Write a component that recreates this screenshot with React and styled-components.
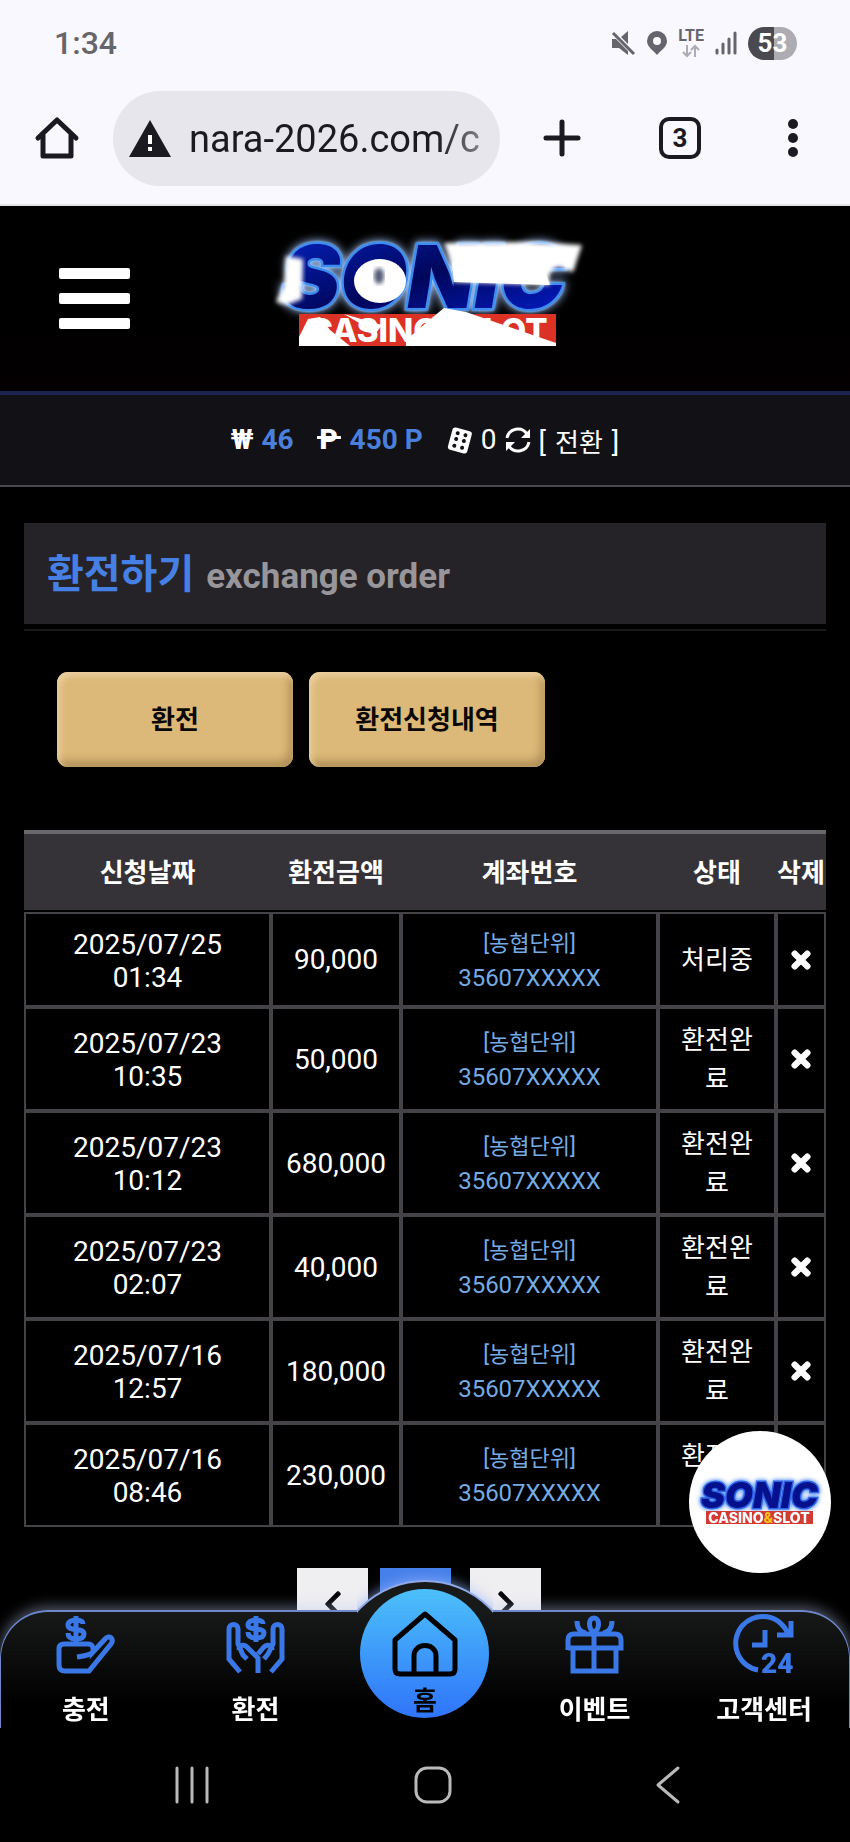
import React from "react";
import styled, { createGlobalStyle } from "styled-components";
import { FaTimes, FaChevronLeft, FaChevronRight } from "react-icons/fa";

const GlobalStyle = createGlobalStyle`
  * {
    box-sizing: border-box;
  }
  body {
    margin: 0;
    background: #000;
    color: #fff;
    font-family: Roboto, "Noto Sans CJK KR", sans-serif;
    font-size: 28px;
  }
  button {
    font-family: inherit;
    border: 0;
    padding: 0;
    background: none;
    color: inherit;
    cursor: pointer;
  }
  a {
    color: inherit;
    text-decoration: none;
  }
  svg {
    display: block;
    flex: none;
    overflow: visible;
  }
`;

const orders = [
  { day: "2025/07/25", time: "01:34", amount: "90,000", status: "처리중" },
  { day: "2025/07/23", time: "10:35", amount: "50,000", status: "환전완료" },
  { day: "2025/07/23", time: "10:12", amount: "680,000", status: "환전완료" },
  { day: "2025/07/23", time: "02:07", amount: "40,000", status: "환전완료" },
  { day: "2025/07/16", time: "12:57", amount: "180,000", status: "환전완료" },
  { day: "2025/07/16", time: "08:46", amount: "230,000", status: "환전완료" },
];

/* ---------- phone status bar + browser bar ---------- */

const Chrome = styled.div`
  background: #f9f8ff;
  color: #1b1a20;
  border-bottom: 2px solid #e2e1e6;
`;

const StatusBar = styled.div`
  display: flex;
  align-items: center;
  height: 86px;
  padding: 0 53px 0 54px;
  color: #66656c;
`;

const Clock = styled.span`
  flex: 1;
  font-size: 32px;
  font-weight: 500;
`;

const StatusIcons = styled.div`
  display: flex;
  align-items: center;
  gap: 11px;
`;

const Network = styled.div`
  display: flex;
  flex-direction: column;
  align-items: center;
  gap: 2px;
  font-size: 16px;
  line-height: 14px;
  font-weight: 700;
`;

const Battery = styled.span`
  width: 49px;
  height: 33px;
  border-radius: 17px;
  background: linear-gradient(90deg, #4a494f 53%, #adacb2 53%);
  color: #fff;
  font-size: 26px;
  font-weight: 700;
  line-height: 33px;
  text-align: center;
`;

const BrowserBar = styled.div`
  display: flex;
  align-items: center;
  height: 118px;
  padding: 0 52px 14px 35px;
`;

const BarButton = styled.button`
  flex: none;
  margin-right: ${(p) => p.$after || 0}px;
`;

const Omnibox = styled.label`
  display: flex;
  flex: 1;
  align-items: center;
  gap: 18px;
  min-width: 0;
  height: 95px;
  margin-right: 43px;
  padding: 0 16px;
  border-radius: 48px;
  background: #e7e6ec;
`;

const UrlInput = styled.input`
  flex: 1;
  min-width: 0;
  padding: 2px 0 0;
  border: 0;
  outline: 0;
  font-family: Roboto, sans-serif;
  font-size: 38px;
  color: transparent;
  background: linear-gradient(90deg, #1b1a20 84%, #8a898f);
  background-clip: text;
  -webkit-background-clip: text;
`;

const TabCount = styled(BarButton)`
  width: 42px;
  height: 42px;
  border: 4px solid #1b1a20;
  border-radius: 10px;
  font-size: 26px;
  line-height: 34px;
  font-weight: 700;
`;

/* ---------- site header ---------- */

const SiteHeader = styled.header`
  display: grid;
  grid-template-columns: 1fr auto 1fr;
  align-items: center;
  height: 189px;
  padding: 0 49px 0 59px;
  border-bottom: 4px solid #1b2450;
  background: linear-gradient(#000 50%, #040001);
`;

const LogoLink = styled.a`
  padding-bottom: 12px;
`;

const MenuButton = styled.button`
  display: flex;
  flex-direction: column;
  gap: 14px;
  width: 71px;

  span {
    height: 11px;
    border-radius: 2px;
    background: #fff;
  }
`;

const Balance = styled.div`
  display: flex;
  align-items: center;
  justify-content: center;
  height: 92px;
  background: #121115;
  border-bottom: 2px solid #4a484c;
  line-height: 38px;
`;

const BalanceItem = styled.span`
  display: flex;
  align-items: center;
  gap: 8px;
  margin-right: ${(p) => p.$after || 0}px;
`;

const Money = styled.strong`
  color: #4a7fdc;
`;

const PesoSign = styled.b`
  position: relative;
  width: 26px;
  font-weight: 900;
  text-align: center;

  &::before {
    content: "";
    position: absolute;
    left: 1px;
    right: 1px;
    top: 15px;
    height: 3px;
    background: #fff;
  }
`;

const SwitchButton = styled.button`
  display: flex;
  align-items: baseline;
  gap: 9px;
  font-size: 28px;

  span {
    font-size: 26px;
  }
`;

/* ---------- page ---------- */

const Main = styled.main`
  padding: 36px 24px 200px;
`;

const TitleBox = styled.div`
  padding-bottom: 5px;
  border-bottom: 2px solid #19181b;
`;

const Title = styled.h1`
  display: flex;
  align-items: baseline;
  gap: 12px;
  height: 101px;
  margin: 0;
  padding: 3px 23px 0;
  background: #252327;
  color: #4680e4;
  font-size: 40px;
  line-height: 98px;
  font-weight: 700;

  small {
    color: #98969b;
    font-size: 35px;
  }
`;

const Actions = styled.div`
  display: flex;
  gap: 16px;
  margin: 41px 33px 63px;
`;

const GoldButton = styled.button`
  width: 236px;
  height: 95px;
  padding-bottom: 4px;
  border-radius: 11px;
  background: #dcb978;
  box-shadow: inset 3px 4px 6px #ecd0a2, inset -4px -6px 8px #b08f58;
  color: #0a0806;
  font-size: 26px;
  font-weight: 700;
`;

const Table = styled.table`
  width: 100%;
  table-layout: fixed;
  border-collapse: separate;
  border-spacing: 0;
  text-align: center;
`;

const HeadCell = styled.th`
  height: 82px;
  padding: 0 0 4px;
  border-top: 4px solid #6a686c;
  border-bottom: 2px solid #000;
  background: #353337;
  background-clip: padding-box;
  font-size: 26px;
  font-weight: 700;
  white-space: nowrap;
`;

const Cell = styled.td`
  height: 95px;
  padding: 12px 16px 10px;
  border: 2px solid #454347;
  font-size: ${(p) => (p.$korean ? 26 : 28)}px;
  line-height: ${(p) => (p.$korean ? 39 : 33)}px;
  word-break: break-all;
`;

const TightCell = styled(Cell)`
  padding: 0;
`;

const Account = styled.a`
  display: flex;
  flex-direction: column;
  color: #75abe4;
  font-size: 24px;
  line-height: 34px;

  span {
    font-size: 22px;
  }
`;

const DeleteButton = styled.button`
  display: flex;
  justify-content: center;
  width: 100%;

  svg {
    stroke: #fff;
    stroke-width: 30px;
  }
`;

const Pager = styled.nav`
  display: flex;
  justify-content: center;
  margin: 41px 12px 0 0;
`;

const PageLink = styled.a`
  display: flex;
  align-items: center;
  justify-content: center;
  width: 71px;
  height: 71px;
  margin-right: ${(p) => p.$after || 0}px;
  background: ${(p) => (p.$current ? "#4680ea" : "#efeef1")};
  color: ${(p) => (p.$current ? "#fff" : "#000")};
`;

/* ---------- floating parts ---------- */

const Bubble = styled.a`
  position: fixed;
  right: 19px;
  bottom: 269px;
  width: 142px;
  height: 142px;
  border-radius: 50%;
  background: #fff;
`;

const Dock = styled.div`
  position: fixed;
  left: 0;
  right: 0;
  bottom: 0;
`;

const Tabs = styled.nav`
  position: relative;
  display: grid;
  grid-template-columns: repeat(5, 1fr);
  height: 118px;
  border: 2px solid #6f88cc;
  border-width: 2px 1px 0;
  border-radius: 48px 48px 0 0;
  background: linear-gradient(#171918, #000 80%);
  box-shadow: 0 -3px 14px rgba(190, 205, 245, 0.45);
`;

// only the cap above the bar is visible, the rest is clipped away
const Hump = styled.div`
  position: absolute;
  left: 50%;
  top: -32px;
  width: 184px;
  height: 184px;
  margin-left: -92px;
  border: 2px solid #8fa9ea;
  border-radius: 50%;
  background: #181a19;
  box-shadow: 0 -2px 12px rgba(150, 180, 255, 0.6);
  clip-path: inset(-20px 24px 151px 24px);
`;

const Tab = styled.a`
  position: relative;
  display: flex;
  flex-direction: column;
  align-items: center;
  gap: 18px;
  padding-top: 4px;
  color: #3b78e7;

  span {
    color: #fff;
    font-size: 26px;
    line-height: 38px;
    font-weight: 700;
  }
`;

const HomeTab = styled.a`
  position: relative;
  display: flex;
  flex-direction: column;
  align-items: center;
  justify-self: center;
  gap: 3px;
  width: 129px;
  height: 129px;
  margin-top: -23px;
  padding-top: 22px;
  border-radius: 50%;
  background: linear-gradient(#4cc0fa, #2f74fa);
  color: #000;
  font-size: 26px;
  line-height: 42px;
  font-weight: 700;
`;

const SystemBar = styled.div`
  position: relative;
  display: flex;
  justify-content: space-between;
  align-items: center;
  height: 114px;
  padding: 0 170px 0 175px;
  background: #000;
  color: #b9b8bb;
`;

/* ---------- drawings ---------- */

const strokeProps = {
  fill: "none",
  stroke: "currentColor",
  strokeWidth: 5,
};

const Wordmark = styled.text`
  font-family: Inter, Roboto, sans-serif;
  font-weight: 900;
  font-style: italic;
  paint-order: stroke;
  filter: drop-shadow(0 0 1px #8cd0ff) drop-shadow(0 0 ${(p) => p.$glow}px ${(p) => p.$glowColor});
`;

const Tagline = styled.text`
  font-family: Inter, Roboto, sans-serif;
  font-weight: 800;
  text-anchor: middle;
  fill: #fff;
`;

function SiteLogo() {
  return (
    <svg width="340" height="135" viewBox="0 0 340 135" role="img" aria-label="SONIC CASINO&SLOT">
      <defs>
        <filter id="soft">
          <feGaussianBlur stdDeviation="2" />
        </filter>
        <linearGradient id="blue" x1="0" y1="0" x2="1" y2="1">
          <stop offset="0" stopColor="#0524c8" />
          <stop offset="0.5" stopColor="#00065a" />
          <stop offset="1" stopColor="#0220d8" />
        </linearGradient>
      </defs>
      <Wordmark x="22" y="83" fontSize="87" fill="url(#blue)" stroke="#3f8cf0" strokeWidth="5" $glow={5} $glowColor="#a9c6ff">
        SONIC
      </Wordmark>
      <rect x="39" y="89" width="257" height="32" fill="#dc3226" />
      <Tagline x="168" y="117" fontSize="33">CASINO&amp;SLOT</Tagline>
      {/* torn white patches */}
      <g fill="#fff">
        <path filter="url(#soft)" d="M26 31L43 34L42 74L27 80L16 77L24 59Z" />
        <ellipse cx="120" cy="56" rx="26" ry="22" />
        <ellipse cx="119" cy="51" rx="5" ry="8" fill="#555c78" filter="url(#soft)" />
        <path filter="url(#soft)" d="M184 18L270 17L322 20L313 47L299 42Q286 45 290 60L194 57L191 38Z" />
        <path d="M194 57L192 38L200 24H290L284 44L290 60Z" />
        <path d="M39 112L48 94L60 92L70 105L90 121H39Z" />
        <path d="M84 89L108 96L122 100L116 108Z" />
        <path d="M146 115L173 92L184 83L206 87L296 118V121H146Z" />
      </g>
    </svg>
  );
}

function BubbleLogo() {
  return (
    <svg width="142" height="142" viewBox="0 0 142 142" role="img" aria-label="SONIC CASINO&SLOT">
      <Wordmark x="12" y="77" fontSize="36" fill="#04108c" stroke="#2f62e8" strokeWidth="3" $glow={2} $glowColor="#4a7cf0">
        SONIC
      </Wordmark>
      <rect x="17" y="80" width="107" height="13" fill="#d23a34" />
      <Tagline x="70" y="92" fontSize="14">
        CASINO<tspan fill="#ffc21c">&amp;</tspan>SLOT
      </Tagline>
    </svg>
  );
}

const MuteIcon = () => (
  <svg width="26" height="26" viewBox="0 0 26 26" fill="currentColor">
    <path d="M2 9H6L18 21V25L9 18H2ZM11 7L18 1V14Z" />
    <path d="M3 3L24 24" stroke="currentColor" strokeWidth="3" />
  </svg>
);

const PinIcon = () => (
  <svg width="20" height="24" viewBox="0 0 20 24" fill="currentColor">
    <path fillRule="evenodd" d="M10 0a10 10 0 0 0-10 10c0 6 6 9 10 14c4-5 10-8 10-14a10 10 0 0 0-10-10zM10 6a4 4 0 1 1 0 8a4 4 0 0 1 0-8z" />
  </svg>
);

const SignalIcon = () => (
  <svg width="22" height="24" viewBox="0 0 22 24" stroke="currentColor" strokeWidth="3" strokeLinecap="round">
    <path d="M2 19V22M8 13V22M14 8V22M20 2V22" />
  </svg>
);

const BrowserHome = () => (
  <svg width="44" height="44" viewBox="0 0 44 44" {...strokeProps} strokeLinejoin="round" strokeLinecap="round">
    <path d="M3 22L22 4L41 22M8 19V40H36V19" />
  </svg>
);

const WarningIcon = () => (
  <svg width="42" height="37" viewBox="0 0 42 37" fill="#1b1a20">
    <path d="M21 0L42 37H0Z" />
    <path d="M21 15V24M21 27V31" stroke="#fff" strokeWidth="4" />
  </svg>
);

const DiceIcon = () => (
  <svg width="26" height="28" viewBox="0 0 26 28">
    <g transform="rotate(15 13 14)">
      <rect x="3" y="3" width="20" height="23" rx="3" fill="#fff" />
      {[8, 14, 21].map((y) => (
        <g key={y} fill="#121115">
          <circle cx="9" cy={y} r="2" />
          <circle cx="17" cy={y} r="2" />
        </g>
      ))}
    </g>
  </svg>
);

const RefreshIcon = () => (
  <svg width="26" height="28" viewBox="0 0 26 28" {...strokeProps} strokeWidth="3">
    <path d="M2 12A11 11 0 0 1 22 8M24 16A11 11 0 0 1 4 20" />
    <path d="M25 3V12H16ZM1 25V16H10Z" fill="#fff" stroke="none" />
  </svg>
);

const HandCoinIcon = () => (
  <svg width="57" height="57" viewBox="0 0 57 57" {...strokeProps}>
    <path d="M26 8C26 5 23 4 19 4C14 4 11 6 11 9C11 16 27 11 27 18C27 22 23 23 19 23C14 23 11 21 11 17M19 0V27" />
    <path d="M2 33Q2 28 7 28H31Q37 28 36 36L48 23C52 18 58 23 54 28L32 55H8Q2 55 2 49ZM36 36Q34 39 20 41" />
  </svg>
);

const HandsIcon = () => (
  <svg width="57" height="57" viewBox="0 0 57 57" {...strokeProps}>
    <path d="M36 8C36 5 33 4 29 4C24 4 21 6 21 9C21 15 37 11 37 17C37 21 33 22 29 22C24 22 21 20 21 16M29 0V26" />
    <path d="M13 56L2 43V13C2 7 11 7 11 13V28L16 39L20 43M12 34C12 28 18 28 21 32L31 42V57M44 56L55 43V13C55 7 46 7 46 13V28L41 38L37 43M45 34C45 28 39 28 36 32L31 38" />
  </svg>
);

const GiftIcon = () => (
  <svg width="57" height="57" viewBox="0 0 57 57" {...strokeProps}>
    <path d="M2 34V24Q2 18 8 18H49Q55 18 55 24V32H2M7 33V55H50V33M28 18V55" />
    <path d="M28 16C22 13 22 2 28 2C34 2 34 13 28 16ZM11 5C11 12 14 16 20 17M46 5C46 12 43 16 37 17" />
  </svg>
);

const SupportIcon = () => (
  <svg width="57" height="57" viewBox="0 0 57 57" {...strokeProps}>
    <path d="M22 54A27 27 0 1 1 52 18M55 5V19H41M29 14V29H16" />
    <text x="25" y="57" fontSize="28" fontWeight="900" fill="currentColor" stroke="none" fontFamily="Roboto, sans-serif">24</text>
  </svg>
);

const HomeIcon = () => (
  <svg width="66" height="66" viewBox="0 0 66 66" {...strokeProps} strokeLinejoin="round">
    <path d="M3 29L33 3L63 29V58Q63 63 58 63H8Q3 63 3 58ZM22 63V45C22 31 44 31 44 45V63" />
  </svg>
);

const OrderRow = ({ order }) => (
  <tr>
    <Cell>
      {order.day}
      <br />
      {order.time}
    </Cell>
    <TightCell>{order.amount}</TightCell>
    <Cell>
      <Account href="#account">
        <span>[농협단위]</span>
        35607XXXXX
      </Account>
    </Cell>
    <Cell $korean>{order.status}</Cell>
    <TightCell>
      <DeleteButton aria-label="삭제">
        <FaTimes size={26} />
      </DeleteButton>
    </TightCell>
  </tr>
);

const App = () => {
  return (
    <>
      <GlobalStyle />
      <Chrome>
        <StatusBar>
          <Clock>1:34</Clock>
          <StatusIcons>
            <MuteIcon />
            <PinIcon />
            <Network>
              LTE
              <svg width="18" height="12" viewBox="0 0 18 12" {...strokeProps} stroke="#adacb2" strokeWidth="2">
                <path d="M5 0V11M1 7L5 11L9 7M13 12V1M9 5L13 1L17 5" />
              </svg>
            </Network>
            <SignalIcon />
            <Battery>53</Battery>
          </StatusIcons>
        </StatusBar>
        <BrowserBar>
          <BarButton aria-label="Home" $after={34}>
            <BrowserHome />
          </BarButton>
          <Omnibox>
            <WarningIcon />
            <UrlInput aria-label="Address" defaultValue="nara-2026.com/c" />
          </Omnibox>
          <BarButton aria-label="New tab" $after={78}>
            <svg width="38" height="38" viewBox="0 0 38 38" {...strokeProps} strokeLinecap="round">
              <path d="M19 3V35M3 19H35" />
            </svg>
          </BarButton>
          <TabCount $after={87}>3</TabCount>
          <BarButton aria-label="More">
            <svg width="10" height="38" viewBox="0 0 10 38" fill="currentColor">
              <circle cx="5" cy="5" r="5" />
              <circle cx="5" cy="19" r="5" />
              <circle cx="5" cy="33" r="5" />
            </svg>
          </BarButton>
        </BrowserBar>
      </Chrome>

      <SiteHeader>
        <MenuButton aria-label="Menu">
          <span />
          <span />
          <span />
        </MenuButton>
        <LogoLink href="#home">
          <SiteLogo />
        </LogoLink>
      </SiteHeader>

      <Balance>
        <BalanceItem $after={22}>
          <b>₩</b>
          <Money>46</Money>
        </BalanceItem>
        <BalanceItem $after={24}>
          <PesoSign>P</PesoSign>
          <Money>450 P</Money>
        </BalanceItem>
        <BalanceItem>
          <DiceIcon />
          0
          <RefreshIcon />
          <SwitchButton>
            [<span>전환</span>]
          </SwitchButton>
        </BalanceItem>
      </Balance>

      <Main>
        <TitleBox>
          <Title>
            환전하기 <small>exchange order</small>
          </Title>
        </TitleBox>
        <Actions>
          <GoldButton>환전</GoldButton>
          <GoldButton>환전신청내역</GoldButton>
        </Actions>
        <Table>
          <colgroup>
            <col />
            <col width="130" />
            <col width="257" />
            <col width="118" />
            <col width="50" />
          </colgroup>
          <thead>
            <tr>
              <HeadCell>신청날짜</HeadCell>
              <HeadCell>환전금액</HeadCell>
              <HeadCell>계좌번호</HeadCell>
              <HeadCell>상태</HeadCell>
              <HeadCell>삭제</HeadCell>
            </tr>
          </thead>
          <tbody>
            {orders.map((order, index) => (
              <OrderRow key={index} order={order} />
            ))}
          </tbody>
        </Table>
        <Pager>
          <PageLink href="#prev" aria-label="Previous" $after={12}>
            <FaChevronLeft size={30} />
          </PageLink>
          <PageLink href="#1" aria-label="Page 1" $after={19} $current />
          <PageLink href="#next" aria-label="Next">
            <FaChevronRight size={30} />
          </PageLink>
        </Pager>
      </Main>

      <Bubble href="#home">
        <BubbleLogo />
      </Bubble>

      <Dock>
        <Tabs>
          <Hump />
          <Tab href="#deposit">
            <HandCoinIcon />
            <span>충전</span>
          </Tab>
          <Tab href="#exchange">
            <HandsIcon />
            <span>환전</span>
          </Tab>
          <HomeTab href="#home">
            <HomeIcon />홈
          </HomeTab>
          <Tab href="#event">
            <GiftIcon />
            <span>이벤트</span>
          </Tab>
          <Tab href="#support">
            <SupportIcon />
            <span>고객센터</span>
          </Tab>
        </Tabs>
        <SystemBar>
          <button aria-label="Recents">
            <svg width="34" height="38" viewBox="0 0 34 38" {...strokeProps} strokeWidth="3" strokeLinecap="round">
              <path d="M2 2V36M17 2V36M32 2V36" />
            </svg>
          </button>
          <button aria-label="Home screen">
            <svg width="38" height="38" viewBox="0 0 38 38" {...strokeProps} strokeWidth="3">
              <rect x="2" y="2" width="34" height="34" rx="11" />
            </svg>
          </button>
          <button aria-label="Back">
            <svg width="24" height="38" viewBox="0 0 24 38" {...strokeProps} strokeWidth="3" strokeLinecap="round" strokeLinejoin="round">
              <path d="M22 2L2 19L22 36" />
            </svg>
          </button>
        </SystemBar>
      </Dock>
    </>
  );
};

export default App;
